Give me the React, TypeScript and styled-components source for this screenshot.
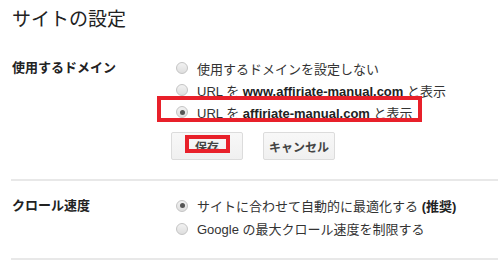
import styled, { createGlobalStyle } from "styled-components";

const GlobalStyle = createGlobalStyle`
  html, body {
    margin: 0;
    padding: 0;
    background: #fff;
  }
  body {
    font-family: "Liberation Sans", "Noto Sans CJK JP", sans-serif;
    color: #222;
  }
`;

const StyledPage = styled.div`
  width: 498px;
  height: 277px;
  overflow: hidden;
  padding-left: 11px;
  box-sizing: border-box;
`;

const Title = styled.h1`
  margin: 0;
  padding: 8px 0 0 1px;
  height: 48px;
  box-sizing: border-box;
  font-size: 19px;
  line-height: 24px;
  font-weight: normal;
  color: #222;
`;

const Section = styled.section<{ $pad: string }>`
  display: grid;
  grid-template-columns: 165px 1fr;
  padding: ${(p) => p.$pad};
  border-bottom: 2px solid #e8e8e8;
`;

const Label = styled.div<{ $top: number }>`
  padding: ${(p) => p.$top}px 0 0 1px;
  font-size: 13px;
  font-weight: bold;
  line-height: 20px;
  color: #222;
`;

const Options = styled.div`
  display: flex;
  flex-direction: column;
`;

const Option = styled.label<{ $height: number; $marked?: boolean }>`
  position: relative;
  display: flex;
  align-items: center;
  gap: 9px;
  height: ${(p) => p.$height}px;
  font-size: 13px;
  color: #333;
  white-space: nowrap;

  b {
    color: #222;
  }

  &::after {
    content: "";
    display: ${(p) => (p.$marked ? "block" : "none")};
    position: absolute;
    left: -19px;
    top: -5px;
    width: 265px;
    height: 26px;
    border: 4px solid #e8202a;
    box-sizing: border-box;
    pointer-events: none;
  }
`;

const Radio = styled.input.attrs({ type: "radio" })`
  appearance: none;
  margin: 0;
  width: 12px;
  height: 12px;
  border-radius: 50%;
  border: 1px solid #c4c4c4;
  background: linear-gradient(#f2f2f2, #dedede);
  box-sizing: border-box;
  display: grid;
  place-items: center;
  flex: none;

  &:checked::before {
    content: "";
    width: 5px;
    height: 5px;
    border-radius: 50%;
    background: #555;
  }
`;

const ButtonRow = styled.div`
  display: flex;
  gap: 20px;
  margin: 9px 0 0 -5px;
`;

const Button = styled.button<{ $marked?: boolean }>`
  position: relative;
  width: 72px;
  height: 28px;
  border: 1px solid #dcdcdc;
  border-radius: 2px;
  background: linear-gradient(#f8f8f8, #f0f0f0);
  font-family: "Liberation Sans", "Noto Sans CJK JP", sans-serif;
  font-size: 12px;
  font-weight: bold;
  color: #444;
  padding: 0;

  &::after {
    content: "";
    display: ${(p) => (p.$marked ? "block" : "none")};
    position: absolute;
    left: 13px;
    top: 2px;
    width: 45px;
    height: 18px;
    border: 4px solid #e8202a;
    box-sizing: border-box;
  }
`;

export default function App() {
  return (
    <>
      <GlobalStyle />
      <StyledPage>
        <Title>サイトの設定</Title>
        <Section $pad="9px 0 19px 0">
          <Label $top={1}>使用するドメイン</Label>
          <Options>
            <Option $height={22}>
              <Radio name="domain" />
              使用するドメインを設定しない
            </Option>
            <Option $height={22}>
              <Radio name="domain" />
              <span>
                URL を <b>www.affiriate-manual.com</b> と表示
              </span>
            </Option>
            <Option $height={22} $marked>
              <Radio name="domain" defaultChecked />
              <span>
                URL を <b>affiriate-manual.com</b> と表示
              </span>
            </Option>
            <ButtonRow>
              <Button $marked>保存</Button>
              <Button>キャンセル</Button>
            </ButtonRow>
          </Options>
        </Section>
        <Section $pad="13px 0 18px 0">
          <Label $top={2}>クロール速度</Label>
          <Options>
            <Option $height={23}>
              <Radio name="crawl" defaultChecked />
              <span>
                サイトに合わせて自動的に最適化する <b>(推奨)</b>
              </span>
            </Option>
            <Option $height={23}>
              <Radio name="crawl" />
              Google の最大クロール速度を制限する
            </Option>
          </Options>
        </Section>
      </StyledPage>
    </>
  );
}
